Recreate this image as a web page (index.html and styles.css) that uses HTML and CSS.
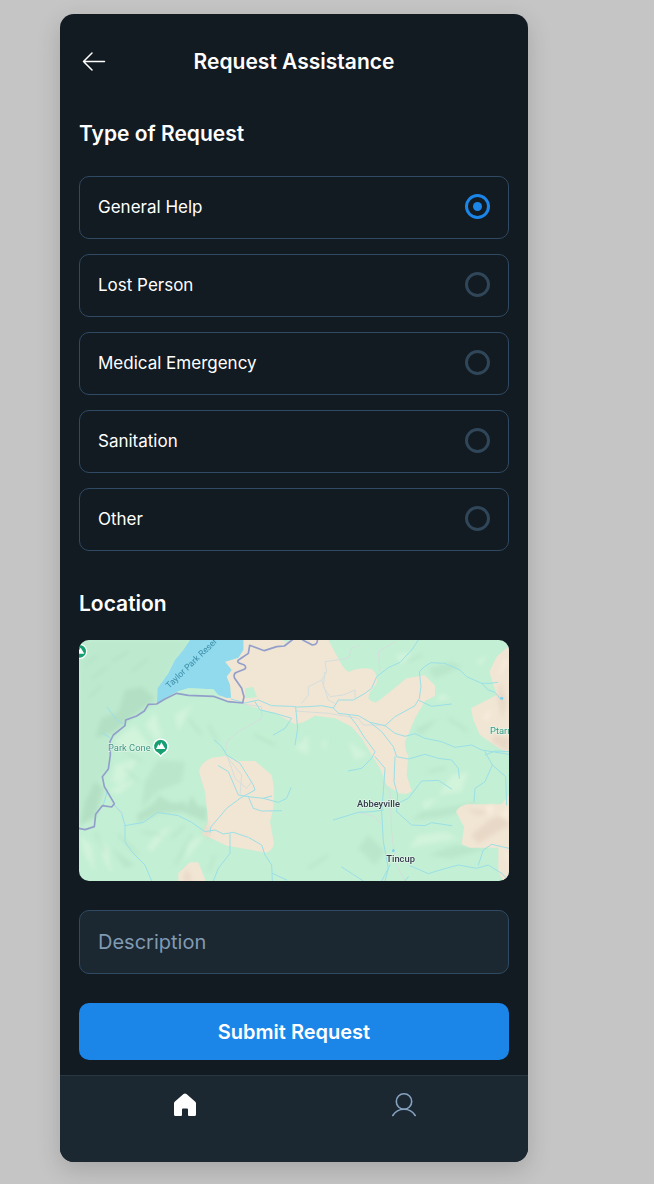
FILE: index.html
```html
<!DOCTYPE html>
<html lang="en">
<head>
<meta charset="utf-8">
<meta name="viewport" content="width=device-width, initial-scale=1">
<title>Request Assistance</title>
<link rel="stylesheet" href="styles.css">
</head>
<body>
<div class="screen">
  <header class="topbar">
    <button class="back" type="button" aria-label="Back">
      <svg class="icon" viewBox="0 0 24 24" fill="none" stroke="currentColor" stroke-width="1.5" stroke-linecap="round" stroke-linejoin="round"><path d="M22.500 11.500H1.500M10 3L1.500 11.500L10 20"/></svg>
    </button>
    <h1 class="heading title">Request Assistance</h1>
  </header>
  <main>
    <form class="form">
      <h2 class="heading" id="type-heading">Type of Request</h2>
      <div class="options" role="radiogroup" aria-labelledby="type-heading">
        <label class="option"><span>General Help</span><input class="radio" type="radio" name="type" checked></label>
        <label class="option"><span>Lost Person</span><input class="radio" type="radio" name="type"></label>
        <label class="option"><span>Medical Emergency</span><input class="radio" type="radio" name="type"></label>
        <label class="option"><span>Sanitation</span><input class="radio" type="radio" name="type"></label>
        <label class="option"><span>Other</span><input class="radio" type="radio" name="type"></label>
      </div>
      <h2 class="heading location">Location</h2>
      <svg class="map" viewBox="12 15 1290 723" role="img" aria-label="Map around Abbeyville and Tincup">
        <defs>
          <filter id="soft" x="-10%" y="-10%" width="120%" height="120%"><feGaussianBlur stdDeviation="6"/></filter>
        </defs>
        <rect x="12" y="15" width="1290" height="723" fill="#c3efd4"/>
        <g filter="url(#soft)">
          <path fill="#b8e6ca" d="M12 15H345L280 115L246 205L205 230L152 255L110 302L105 400L82 425L60 530L12 580Z" opacity=".5"/>
          <path fill="#a9d6ba" d="M150 165L200 155L240 190L190 230L120 290L60 310L80 250L130 230ZM30 500L60 440L90 460L60 550L15 570ZM185 540L240 500L250 480L290 505L330 500L335 520L350 480L365 510L400 520L390 560L320 530L250 535L190 565Z" opacity=".5"/>
          <path fill="#b2e0c4" d="M250 375L330 380L320 440L245 470L200 520L210 440ZM110 640L180 690L150 700ZM460 60L430 100ZM1060 100L1130 80L1160 95L1080 130ZM1220 500L1190 520L1110 545L1010 555L1040 530ZM1140 630L1240 640L1130 670L1060 660ZM880 600L930 650L900 690L850 640ZM1015 285L1090 250L1040 300Z" opacity=".5"/>
          <path fill="#d5f6dd" d="M115 320L180 270L200 300L230 340L140 350ZM240 230L260 300L245 320L210 270ZM120 390L190 370L140 450L110 440ZM100 465L160 440L190 430L130 480ZM15 600L50 630L60 710L25 650ZM75 610L100 640L110 720L85 670ZM250 590L290 575L230 650L215 640ZM340 620L390 600L330 680ZM1030 600L1110 590L1150 610L1000 640ZM1095 175L1130 190L1085 200ZM660 340L700 300L700 360ZM740 325L755 310L750 350ZM820 320L880 360L840 375ZM1200 80L1235 60L1220 90ZM960 60L1010 50L980 90ZM300 240L350 210L310 290ZM1130 420L1180 410L1160 470L1090 480ZM1040 500L1090 490L1050 525Z" opacity=".75"/>
          <path fill="none" stroke="#b0dec1" stroke-width="6" opacity=".7" d="M30 90L70 60M50 130L100 95M110 80L160 50M170 110L220 70M40 190L80 150M120 330L200 380M150 400L190 440M200 590L260 600M290 610L330 570M300 690L350 600M420 660L400 710M130 600L190 660M60 590L90 650M400 270L430 320M340 250L380 300M540 300L600 330M1000 80L1040 60M1120 250L1180 290M1110 400L1060 410M700 700L760 660"/>
        </g>
        <g fill="#f1e5d4">
          <path d="M505 15L505 45L490 68L450 80L470 105L455 125L465 150L468 188L430 180L460 200L505 207L600 235L660 267L685 262L720 242L780 250L830 275L860 310L890 360L915 400L935 450L970 475Q1000 480 1010 468L995 420L1000 360Q990 350 990 320L1020 250L1050 197Q1070 190 1080 182V152L1050 121L995 130L945 170L910 198Q895 208 880 190L883 175L905 145Q910 115 890 103L875 100Q840 100 825 110Q812 112 795 80L760 15Z"/>
          <path d="M1302 32L1265 65L1243 110L1265 180L1188 220L1195 255L1215 300L1265 335L1302 355Z"/>
          <path d="M1302 478L1280 508L1175 508Q1150 515 1143 530L1167 575L1160 628L1185 638L1270 638V710L1285 738H1302Z"/>
          <path d="M372 410Q375 385 410 368L450 363L490 378L540 378L590 420L597 460L595 520L585 560L597 625Q592 648 575 653L455 632L383 598L400 560L390 470Z"/>
          <path d="M310 738V715L345 682H370L392 738Z"/>
        </g>
        <g filter="url(#soft)">
          <path fill="#e6d4c3" d="M383 595L400 560L403 610ZM335 700L350 738H325ZM1190 600L1250 550L1290 540L1302 570L1250 600L1210 625ZM1275 140L1295 200L1280 250L1270 190ZM1260 300L1302 310V350L1250 320ZM1170 520L1210 540L1240 530Z" opacity=".8"/>
          <path fill="#f8eddd" d="M1220 245L1250 220L1240 260ZM1230 515L1260 510L1245 545ZM1280 640L1302 660V690ZM1275 540L1300 510V560ZM1285 70L1300 80L1270 130Z"/>
        </g>
        <path fill="#c3efd4" d="M510 160L535 156L546 187L510 190ZM620 15H645L635 22Z"/>
        <path fill="#91d9ec" d="M345 15L325 45L300 75L280 115L248 160L246 205L270 190L305 170L340 160L415 163L430 180L455 189L468 188L465 150L455 125L470 105L450 80L490 68L505 45V15Z"/>
        <path fill="#c3efd4" d="M305 170L340 160L415 163L430 180L415 184L340 181Z"/>
        <g fill="none" stroke="#d4dedc" stroke-width="3" stroke-linejoin="round">
          <path d="M680 205L700 180L700 155L740 135L755 110L750 80L820 70L830 40L855 30M750 110L745 155L765 185L805 180L840 165L840 190M740 135L760 195L780 205M915 110L910 50L960 20M505 207L560 215L560 250L490 290L455 320L450 360M660 228L760 235L850 250L865 270L930 270M455 360L470 400L480 430L515 460L530 440M460 370L500 420L495 480M920 440L945 470L950 590L960 680L990 738M845 530L900 545L920 570M105 500L140 530L150 570"/>
        </g>
        <g fill="none" stroke="#9adfe6" stroke-width="3" stroke-linecap="round" stroke-linejoin="round">
          <path d="M468 192L510 204L550 195L590 212L650 214L665 216L700 215L740 212L775 219L790 195L835 195L870 175L890 160L905 125L940 98L975 82L1010 45L1030 15"/>
          <path d="M540 200L555 225L600 235L650 250L630 280L595 300M662 216L668 280L660 330M775 219L790 235L850 242L885 262L930 272L960 295L990 304L1020 296L1050 310L1100 320L1140 337L1190 330L1220 345L1302 358"/>
          <path d="M820 238L845 270L870 310L900 350L890 370L860 400L820 408M885 262L920 290L955 335L965 365L1000 372L1050 358L1090 370L1130 375L1150 400L1153 430M930 272L960 245L1020 212L1033 190L1038 155L1033 110Q1045 95 1068 83L1110 85L1155 105L1175 125L1220 145L1245 145L1268 142M1033 197L1070 214L1130 207M1220 145L1240 165L1260 172L1275 190"/>
          <path d="M960 365L957 440L968 480L965 530M900 365L930 400L925 470L920 530L925 620L940 700L930 738M968 505L1000 490L1040 438L1090 436L1130 462M925 525L890 530L850 532L775 555M965 530L1010 570L1050 572L1070 563L1130 572M1230 350L1252 390L1230 440L1200 460L1197 500M1252 390L1292 425L1295 510M1230 360L1260 348L1302 350"/>
          <path d="M920 738L945 690M1005 692L1060 716L1095 705L1150 690L1205 700L1240 690L1280 715L1300 735M1210 690L1225 645L1250 628L1302 640M800 696L840 722L865 738M990 738L1000 725"/>
          <path d="M97 217L125 255L148 268M80 293L105 308M418 315L440 335L455 360L495 385L535 450L540 465L495 490L455 520L430 550L408 575L405 592M430 392L460 410L490 480L520 485L565 490L590 483M520 485L535 520L560 528L620 527M565 490L610 502L635 490L648 458"/>
          <path d="M118 510L140 535L150 572L205 562L248 532L310 542L350 562L390 590L420 585L445 597L475 592L520 607L560 630L570 660L590 690L592 738M150 572L150 620L170 650L210 690L230 738M465 597L465 655L430 700L415 738M592 715L635 735M98 465L85 510"/>
        </g>
        <circle cx="1280" cy="190" r="5" fill="#79d3ef"/>
        <circle cx="955" cy="647" r="4" fill="#79d3ef"/>
        <g fill="none" stroke="#929fca" stroke-width="5" stroke-linecap="round" stroke-linejoin="round">
          <path d="M12 580L30 584L58 575L62 538L82 512L110 516L118 506L88 455L82 425L100 402L106 360L105 320L115 300L150 272L152 255L185 243L208 228L220 208L245 207L270 192L305 175L340 181L415 184L460 200L503 204L507 185L500 160L478 128Q475 115 485 112L508 103Q516 98 508 90L492 84Q483 78 495 72L520 55L524 31L568 47L605 35L628 33L655 12"/>
          <path d="M683 15L712 30Q730 28 727 12"/>
        </g>
        <g stroke="#fff" stroke-width="4" fill="#16a071">
          <circle cx="14" cy="49" r="21"/>
          <path d="M249 355A22 22 0 1 1 265 355L257 363Z"/>
        </g>
        <path fill="#fff" d="M243 342L250 328L254 332L259 322L271 342ZM12 56V46L17 38L28 56Z"/>
        <text class="park lake" transform="translate(283 161) rotate(-44)">Taylor Park Reser</text>
        <text class="park" x="99" y="347">Park Cone</text>
        <text class="park" x="1245" y="296">Ptarm</text>
        <text class="town" x="846" y="517">Abbeyville</text>
        <text class="town" x="934" y="682">Tincup</text>
      </svg>
      <input class="field" type="text" placeholder="Description" aria-label="Description">
      <button class="submit" type="button">Submit Request</button>
    </form>
  </main>
  <nav class="tabs" aria-label="Main">
    <a class="tab active" href="#home" aria-label="Home"><svg class="icon" viewBox="0 0 24 24"><path fill="currentColor" d="M1 10.500Q1 9.500 1.700 8.800L10.500 1Q12 0 13.500 1L22.300 8.800Q23 9.500 23 10.500V21.500Q23 23 21.500 23H16Q15 23 15 22V16.500Q15 15.500 14 15.500H10Q9 15.500 9 16.500V22Q9 23 8 23H2.500Q1 23 1 21.500Z"/></svg></a>
    <a class="tab" href="#profile" aria-label="Profile"><svg class="icon" viewBox="0 0 24 24" fill="none" stroke="currentColor" stroke-width="1.6" stroke-linecap="round"><circle cx="12" cy="8.500" r="7.700"/><path d="M.8 22.500C3.200 18.500 7.200 16.200 12 16.200S20.800 18.500 23.200 22.500"/></svg></a>
  </nav>
</div>
</body>
</html>
```
FILE: styles.css
```css
* {
  box-sizing: border-box;
}

body {
  margin: 0;
  padding: 14px 126px 22px 60px;
  background: #c5c5c5;
  color: #fff;
  font-family: Inter, "Liberation Sans", sans-serif;
}

.screen {
  overflow: hidden;
  border-radius: 14px;
  background: #121a22;
  box-shadow: 0 8px 24px rgba(0, 0, 0, 0.16);
}

.topbar {
  display: grid;
  grid-template-columns: 28px 1fr 28px;
  align-items: center;
  padding: 20px 20px 16px;
}

.back {
  display: grid;
  place-items: center;
  padding: 0;
  border: 0;
  background: none;
  color: inherit;
}

.icon {
  display: block;
  width: 24px;
  height: 24px;
}

.heading {
  margin: 0;
  font-size: 21px;
  font-weight: 600;
  line-height: 28px;
}

.title {
  padding: 14px 0;
  text-align: center;
}

.form {
  display: flex;
  flex-direction: column;
  padding: 14px 19px 15px;
}

.options {
  display: grid;
  gap: 15px;
  margin-top: 28px;
}

.option {
  display: flex;
  align-items: center;
  justify-content: space-between;
  height: 63px;
  padding: 0 18px 2px;
  border: 1px solid #2f4a62;
  border-radius: 10px;
  font-size: 17px;
  line-height: 26px;
}

.radio {
  appearance: none;
  display: grid;
  place-items: center;
  width: 25px;
  height: 25px;
  margin: 0;
  border: 3px solid #304659;
  border-radius: 50%;
}

.radio:checked {
  border-color: #1b85e8;
}

.radio:checked::before {
  content: "";
  width: 9px;
  height: 9px;
  border-radius: 50%;
  background: #1b85e8;
}

.location {
  margin-top: 39px;
}

.map {
  display: block;
  width: 100%;
  margin-top: 22px;
  border-radius: 10px;
}

.park,
.town {
  font-family: Roboto, "Liberation Sans", sans-serif;
  font-size: 28px;
  stroke: #e4f7ea;
  stroke-width: 4px;
  stroke-linejoin: round;
  paint-order: stroke;
}

.park {
  fill: #3d9580;
}

.lake {
  fill: #3a8ea8;
  font-size: 26px;
  stroke: none;
}

.town {
  fill: #333c4b;
  font-weight: 500;
}

.field {
  width: 100%;
  height: 64px;
  margin-top: 29px;
  padding: 0 18px;
  border: 1px solid #2f4a62;
  border-radius: 10px;
  background: #1b2731;
  color: #fff;
  font: 400 20px/28px Inter, "Liberation Sans", sans-serif;
}

.field::placeholder {
  color: #809ab3;
  opacity: 1;
}

.submit {
  height: 57px;
  margin-top: 29px;
  border: 0;
  border-radius: 10px;
  background: #1b85e8;
  color: #fff;
  font: 600 20px/28px Inter, "Liberation Sans", sans-serif;
}

.tabs {
  display: flex;
  padding: 17px 15px 45px;
  border-top: 1px solid #273643;
  background: #1b2731;
}

.tab {
  display: grid;
  flex: 1;
  place-items: center;
  color: #86a3c0;
}

.active {
  color: #fff;
}
```
